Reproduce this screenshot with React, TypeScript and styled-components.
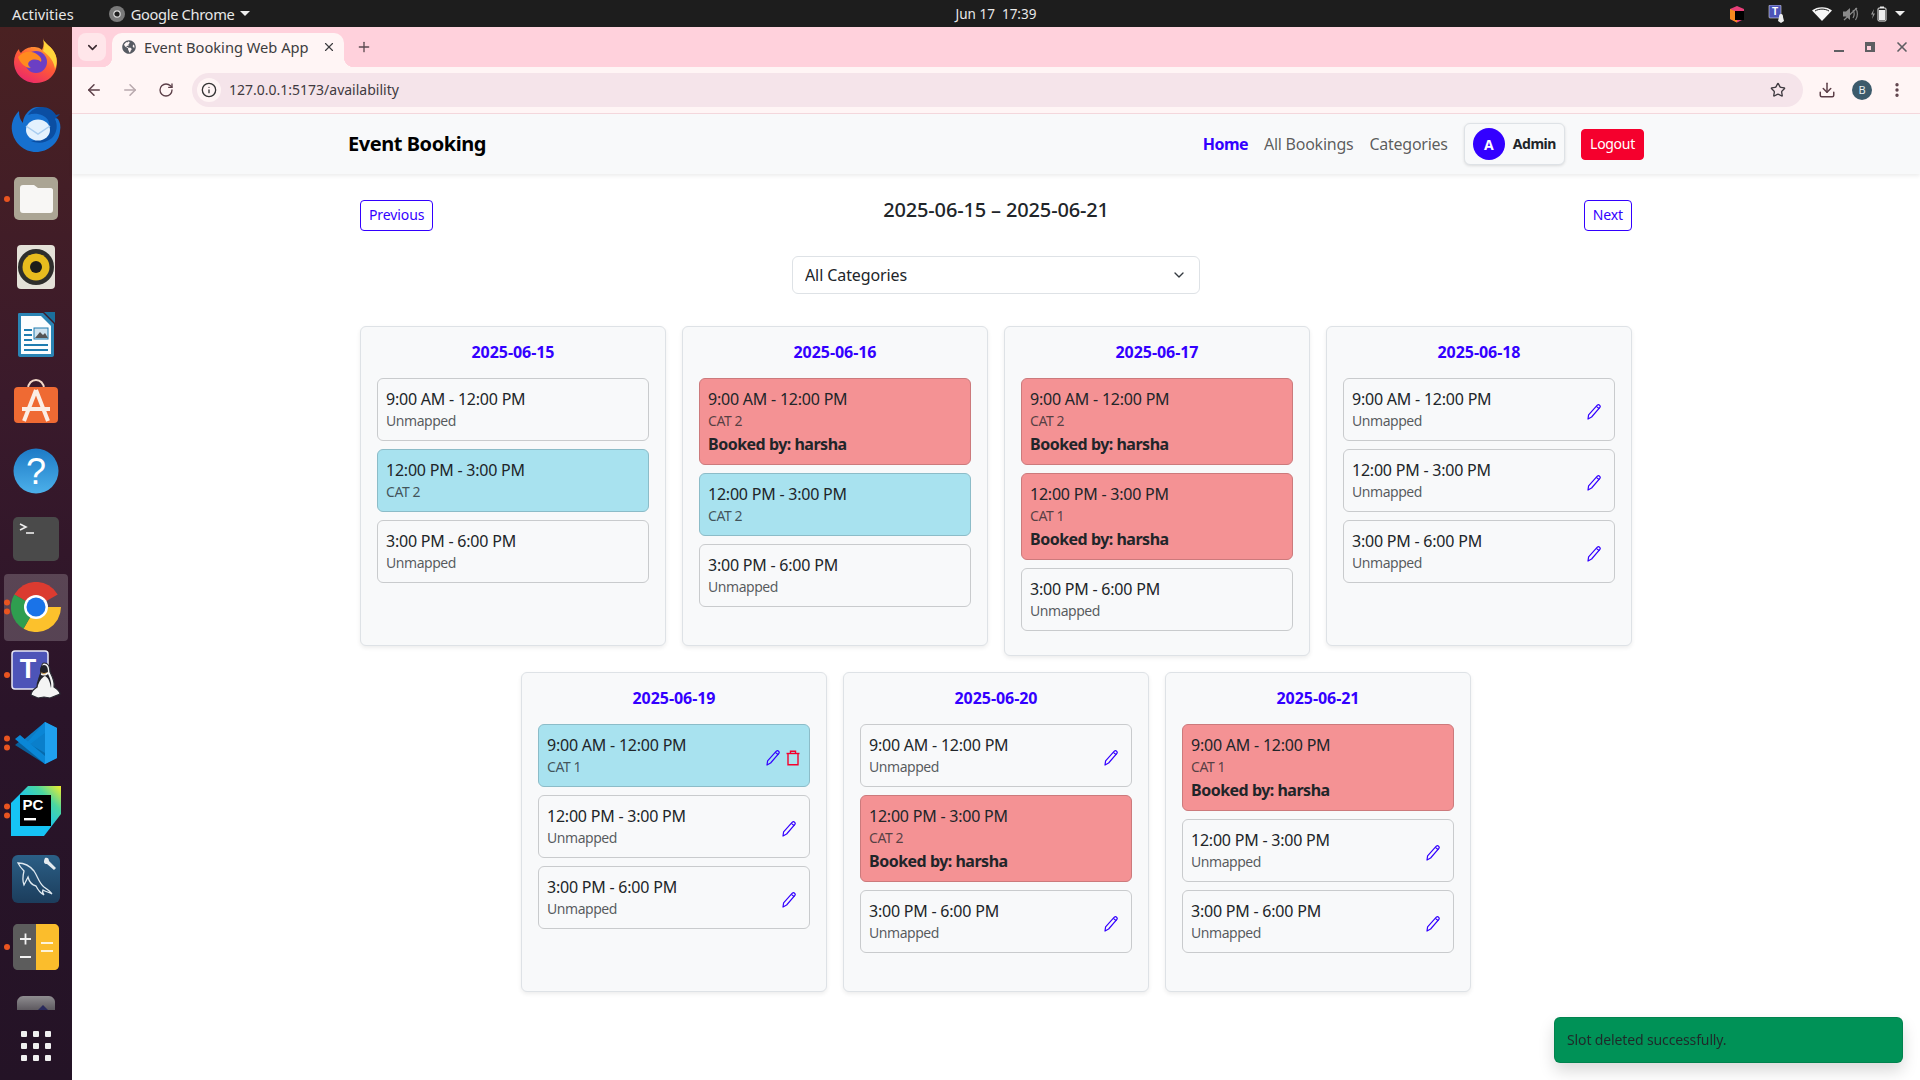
import React from 'react';
import styled, { createGlobalStyle } from 'styled-components';
import {
  ArrowLeft,
  ArrowRight,
  ChevronDown,
  Download,
  EllipsisVertical,
  Info,
  Plus,
  RotateCw,
  Star,
  X,
} from 'lucide-react';
import { FaGlobeAmericas } from 'react-icons/fa';

type SlotKind = 'free' | 'mapped' | 'booked';

interface Slot {
  time: string;
  label: string;
  kind: SlotKind;
  bookedBy?: string;
  editable?: boolean;
  deletable?: boolean;
}

interface Day {
  date: string;
  slots: Slot[];
}

const T1 = '9:00 AM - 12:00 PM';
const T2 = '12:00 PM - 3:00 PM';
const T3 = '3:00 PM - 6:00 PM';

const free = (time: string, editable = false): Slot => ({ time, label: 'Unmapped', kind: 'free', editable });
const booked = (time: string, label: string): Slot => ({ time, label, kind: 'booked', bookedBy: 'harsha' });

const days: Day[] = [
  { date: '2025-06-15', slots: [free(T1), { time: T2, label: 'CAT 2', kind: 'mapped' }, free(T3)] },
  { date: '2025-06-16', slots: [booked(T1, 'CAT 2'), { time: T2, label: 'CAT 2', kind: 'mapped' }, free(T3)] },
  { date: '2025-06-17', slots: [booked(T1, 'CAT 2'), booked(T2, 'CAT 1'), free(T3)] },
  { date: '2025-06-18', slots: [free(T1, true), free(T2, true), free(T3, true)] },
  {
    date: '2025-06-19',
    slots: [{ time: T1, label: 'CAT 1', kind: 'mapped', editable: true, deletable: true }, free(T2, true), free(T3, true)],
  },
  { date: '2025-06-20', slots: [free(T1, true), booked(T2, 'CAT 2'), free(T3, true)] },
  { date: '2025-06-21', slots: [booked(T1, 'CAT 1'), free(T2, true), free(T3, true)] },
];

const PRIMARY = '#3300ff';
const DANGER = '#f5002d';
const UI_FONT = '"Noto Sans", "Open Sans", sans-serif';

const GlobalStyle = createGlobalStyle`
  html, body {
    margin: 0;
    height: 100%;
    overflow: hidden;
  }
  body {
    font-family: ${UI_FONT};
    color: #212529;
    background: #fff;
  }
  * {
    box-sizing: border-box;
  }
`;

const Shell = styled.div`
  display: flex;
  flex-direction: column;
  height: 100vh;
  overflow: hidden;
`;

const TopBar = styled.header`
  display: grid;
  grid-template-columns: 1fr auto 1fr;
  align-items: center;
  height: 27px;
  padding: 0 12px;
  background: #1d1d1d;
  color: #e8e8e8;
  font-size: 14.67px;
`;

const TopLeft = styled.div`
  display: flex;
  align-items: center;
  letter-spacing: 0.07px;
`;

const AppMenu = styled.div`
  display: flex;
  align-items: center;
  gap: 6px;
  margin-left: 35px;
  letter-spacing: -0.35px;
`;

const Caret = styled.span`
  width: 0;
  height: 0;
  border-left: 5px solid transparent;
  border-right: 5px solid transparent;
  border-top: 5px solid #eee;
`;

const Clock = styled.div`
  margin-left: 72px;
  white-space: pre;
  font-size: 13.5px;
`;

const Tray = styled.div`
  display: flex;
  align-items: center;
  justify-content: flex-end;
  padding-right: 3px;
`;

const TrayIcon = styled.span<{ $gap: number }>`
  display: flex;
  margin-left: ${props => props.$gap}px;
`;

const Desktop = styled.div`
  display: flex;
  flex: 1;
  min-height: 0;
`;

const Dock = styled.nav`
  display: flex;
  flex-direction: column;
  flex: 0 0 72px;
  background: linear-gradient(180deg, #4a2122 0%, #3a1a2b 35%, #2a1429 65%, #241326 100%);
`;

const DockList = styled.div`
  flex: 1;
  min-height: 0;
  padding-top: 2px;
  overflow: hidden;
`;

const DockItem = styled.div<{ $active?: boolean; $lift?: number }>`
  position: relative;
  display: flex;
  align-items: center;
  justify-content: center;
  width: 72px;
  height: 68px;

  &::before {
    content: '';
    position: absolute;
    inset: 1px 4px 0;
    border-radius: 4px;
    background: ${props => (props.$active ? 'rgba(255,255,255,0.2)' : 'transparent')};
  }

  svg {
    position: relative;
    margin-bottom: ${props => props.$lift ?? 0}px;
  }
`;

const RunDots = styled.div`
  position: absolute;
  left: 4px;
  top: 50%;
  display: flex;
  flex-direction: column;
  gap: 3px;
  transform: translateY(-50%);
`;

const RunDot = styled.span`
  width: 6px;
  height: 6px;
  border-radius: 50%;
  background: #e95420;
`;

const ShowApps = styled.div`
  display: grid;
  grid-template-columns: repeat(3, 6px);
  gap: 6px;
  align-content: center;
  justify-content: center;
  height: 70px;
  padding-top: 2px;
`;

const AppDot = styled.span`
  width: 6px;
  height: 6px;
  border-radius: 1px;
  background: #f0f0f0;
`;

const Browser = styled.main`
  display: flex;
  flex: 1;
  flex-direction: column;
  min-width: 0;
`;

const TabStrip = styled.div`
  display: flex;
  align-items: flex-end;
  height: 40px;
  padding-left: 6px;
  background: #ffd1dc;
`;

const TabSearch = styled.div`
  display: flex;
  align-items: center;
  justify-content: center;
  align-self: flex-start;
  width: 28px;
  height: 28px;
  margin-top: 6px;
  border-radius: 8px;
  background: #ffe6ea;
  color: #3a2a30;
`;

const Tab = styled.div`
  position: relative;
  display: flex;
  align-items: center;
  width: 232px;
  height: 34px;
  margin-left: 6px;
  padding: 0 8px 6px 10px;
  border-radius: 10px 10px 0 0;
  background: #fff5f5;
  color: #3d3d40;
  font-size: 14.67px;

  &::before,
  &::after {
    content: '';
    position: absolute;
    bottom: 0;
    width: 10px;
    height: 10px;
  }
  &::before {
    left: -10px;
    background: radial-gradient(circle at 0 0, transparent 10px, #fff5f5 10.5px);
  }
  &::after {
    right: -10px;
    background: radial-gradient(circle at 100% 0, transparent 10px, #fff5f5 10.5px);
  }
`;

const TabTitle = styled.span`
  flex: 1;
  margin-left: 8px;
  white-space: nowrap;
`;

const NewTab = styled.div`
  display: flex;
  align-self: center;
  margin: 0 0 0 12px;
  color: #5b4a50;
`;

const WindowControls = styled.div`
  display: flex;
  align-items: center;
  align-self: center;
  gap: 21px;
  margin-left: auto;
  padding-right: 10px;
  color: #5e5e62;
`;

const MinimizeGlyph = styled.span`
  width: 10px;
  height: 2px;
  margin-top: 8px;
  background: #5e5e62;
`;

const RestoreGlyph = styled.span`
  position: relative;
  width: 8px;
  height: 8px;
  margin-top: 2px;
  border: 2px solid #5e5e62;

  &::after {
    content: '';
    position: absolute;
    top: -4px;
    right: -4px;
    width: 8px;
    height: 8px;
    border-top: 2px solid #5e5e62;
    border-right: 2px solid #5e5e62;
  }
`;

const Toolbar = styled.div`
  display: flex;
  align-items: center;
  height: 47px;
  padding: 0 14px 1px 12px;
  border-bottom: 1px solid #f6d9de;
  background: #fff5f5;
  color: #5c3f48;
`;

const ToolButton = styled.span<{ $dim?: boolean }>`
  display: flex;
  justify-content: center;
  width: 20px;
  margin-right: 16px;
  color: ${props => (props.$dim ? '#b8a8ad' : '#5c3f48')};
`;

const Omnibox = styled.div`
  display: flex;
  flex: 1;
  align-items: center;
  height: 34px;
  padding: 0 17px 0 5px;
  border-radius: 17px;
  background: #f5e4ea;
  color: #3f3a40;
  font-size: 14px;
`;

const SiteInfo = styled.span`
  display: flex;
  align-items: center;
  justify-content: center;
  width: 24px;
  height: 24px;
  border-radius: 50%;
  background: #fff5f5;
  color: #333;
`;

const Url = styled.span`
  flex: 1;
  margin-left: 8px;
`;

const ToolEnd = styled.div`
  display: flex;
  align-items: center;
  gap: 16px;
  margin-left: 15px;
`;

const Profile = styled.span`
  display: flex;
  align-items: center;
  justify-content: center;
  width: 20px;
  height: 20px;
  border-radius: 50%;
  background: #3c5a6b;
  color: #e8eef0;
  font-size: 11px;
`;

const Viewport = styled.div`
  flex: 1;
  min-height: 0;
  background: #fff;
`;

const Navbar = styled.div`
  height: 60px;
  background: #f8f9fa;
  box-shadow: 0 2px 4px rgba(0, 0, 0, 0.075);
`;

const NavInner = styled.div`
  display: flex;
  align-items: center;
  justify-content: space-between;
  max-width: 1320px;
  height: 100%;
  margin: 0 auto;
  padding: 0 12px;
`;

const Brand = styled.div`
  margin-bottom: 2px;
  color: #000;
  font-size: 20px;
  font-weight: 700;
  letter-spacing: -0.45px;
`;

const NavLinks = styled.div`
  display: flex;
  align-items: center;
  gap: 16px;
`;

const NavLink = styled.a<{ $active?: boolean }>`
  margin-bottom: 1px;
  color: ${props => (props.$active ? PRIMARY : 'rgba(0, 0, 0, 0.65)')};
  font-size: 16px;
  font-weight: ${props => (props.$active ? 700 : 400)};
  letter-spacing: ${props => (props.$active ? -0.55 : -0.25)}px;
`;

const UserChip = styled.div`
  display: flex;
  align-items: center;
  gap: 8px;
  padding: 4px 8px;
  border: 1px solid #dee2e6;
  border-radius: 6px;
  background: #f8f9fa;
  box-shadow: 0 1px 3px rgba(0, 0, 0, 0.12);
`;

const Avatar = styled.span`
  display: flex;
  align-items: center;
  justify-content: center;
  width: 32px;
  height: 32px;
  border-radius: 50%;
  background: ${PRIMARY};
  color: #fff;
  font-size: 14px;
  font-weight: 700;
`;

const UserName = styled.span`
  margin-bottom: 2px;
  font-size: 14px;
  font-weight: 700;
  letter-spacing: -0.45px;
`;

const LogoutButton = styled.button`
  height: 31px;
  width: 63px;
  padding: 0 0 2px;
  border: 1px solid ${DANGER};
  border-radius: 4px;
  background: ${DANGER};
  color: #fff;
  font: 400 14px ${UI_FONT};
  letter-spacing: -0.3px;
`;

const Content = styled.div`
  display: flex;
  flex-direction: column;
  max-width: 1320px;
  margin: 0 auto;
  padding: 26px 24px 0;
`;

const WeekHeader = styled.div`
  display: grid;
  grid-template-columns: 1fr auto 1fr;
  align-items: flex-start;
  height: 56px;
`;

const PagerButton = styled.button<{ $end?: boolean }>`
  justify-self: ${props => (props.$end ? 'end' : 'start')};
  height: 31px;
  padding: 0 8px 2px;
  border: 1px solid ${PRIMARY};
  border-radius: 4px;
  background: #fff;
  color: ${PRIMARY};
  font: 400 14px ${UI_FONT};
  letter-spacing: -0.1px;
`;

const WeekTitle = styled.h5`
  margin: -1px 0 0;
  font-size: 20px;
  font-weight: 500;
  line-height: 22px;
  letter-spacing: -0.15px;
`;

const FilterRow = styled.div`
  display: flex;
  justify-content: center;
  margin-bottom: 32px;
`;

const SelectWrap = styled.div`
  position: relative;
  width: 408px;
  color: #343a40;
`;

const CategorySelect = styled.select`
  display: block;
  width: 100%;
  height: 38px;
  padding: 0 36px 0 12px;
  border: 1px solid #dee2e6;
  border-radius: 6px;
  background: #fff;
  color: #212529;
  font: 400 16px ${UI_FONT};
  letter-spacing: -0.1px;
  appearance: none;
`;

const SelectChevron = styled.span`
  position: absolute;
  top: 11px;
  right: 13px;
  display: flex;
  pointer-events: none;
`;

const DaysGrid = styled.div`
  display: flex;
  flex-wrap: wrap;
  align-items: flex-start;
  justify-content: center;
  gap: 16px;
`;

const DayCard = styled.section`
  display: flex;
  flex-direction: column;
  width: 306px;
  min-height: 320px;
  padding: 16px;
  border: 1px solid #dee2e6;
  border-radius: 6px;
  background: #f8f9fa;
  box-shadow: 0 2px 4px rgba(0, 0, 0, 0.075);
`;

const DayTitle = styled.h6`
  margin: 0 0 16px;
  color: ${PRIMARY};
  font-size: 16px;
  font-weight: 700;
  line-height: 19.2px;
  text-align: center;
  letter-spacing: -0.05px;
`;

const slotColors: Record<SlotKind, { bg: string; border: string }> = {
  free: { bg: '#f8f9fa', border: '#c9cbcd' },
  mapped: { bg: '#a8e2ef', border: '#8cbcc8' },
  booked: { bg: '#f49294', border: '#cc7a7c' },
};

const SlotRow = styled.div<{ $kind: SlotKind }>`
  display: flex;
  align-items: center;
  justify-content: space-between;
  margin-bottom: 8px;
  padding: 8px;
  border: 1px solid ${props => slotColors[props.$kind].border};
  border-radius: 6px;
  background: ${props => slotColors[props.$kind].bg};
`;

const SlotText = styled.div`
  min-width: 0;
`;

const SlotTime = styled.div`
  font-size: 16px;
  line-height: 24px;
  letter-spacing: -0.22px;
`;

const SlotLabel = styled.div`
  padding-bottom: 2px;
  color: rgba(33, 37, 41, 0.75);
  font-size: 14px;
  line-height: 19px;
  letter-spacing: -0.45px;
`;

const BookedBy = styled.div`
  font-size: 16px;
  font-weight: 700;
  line-height: 24px;
  letter-spacing: -0.5px;
`;

const SlotActions = styled.div<{ $solo: boolean }>`
  display: flex;
  align-items: center;
  gap: 4px;
  margin-top: 4px;
  margin-right: ${props => (props.$solo ? 4 : 0)}px;
`;

const IconButton = styled.button<{ $color: string }>`
  display: flex;
  width: 16px;
  height: 16px;
  padding: 0;
  border: 0;
  background: none;
  color: ${props => props.$color};
`;

const Toast = styled.div`
  position: fixed;
  right: 17px;
  bottom: 17px;
  display: flex;
  align-items: center;
  width: 349px;
  height: 46px;
  padding: 0 12px 2px;
  border: 1px solid rgba(0, 0, 0, 0.1);
  border-radius: 6px;
  background: #009257;
  color: #1f2a2a;
  font-size: 14px;
  letter-spacing: -0.13px;
  box-shadow: 0 8px 16px rgba(0, 0, 0, 0.15);
`;

const PencilIcon = () => (
  <svg width="16" height="16" viewBox="0 0 16 16" fill="none" stroke="currentColor" strokeWidth="1.2" strokeLinejoin="round">
    <path d="M11.3 1.2c.7-.6 1.8-.5 2.4.2.6.7.6 1.7 0 2.3L5.6 13 2 15l.6-4.2z" />
    <path d="M10.3 2.4l3 2.4" />
  </svg>
);

const TrashIcon = () => (
  <svg width="16" height="16" viewBox="0 0 16 16" fill="none" stroke="currentColor" strokeWidth="1.4">
    <path d="M1.5 3.5h13" />
    <path d="M5.5 3.5V1.2h5v2.3" />
    <path d="M3 3.5v11.3h10V3.5" />
  </svg>
);

const FirefoxIcon = () => (
  <svg width="48" height="48" viewBox="0 0 48 48">
    <defs>
      <linearGradient id="ffBase" x1="0.7" y1="0" x2="0.2" y2="1">
        <stop offset="0" stopColor="#ffbd2e" />
        <stop offset="0.5" stopColor="#ff5a36" />
        <stop offset="1" stopColor="#e8246f" />
      </linearGradient>
    </defs>
    <path d="M31 1c1 5 5 6 9 11 5 6 6 13 4 20-3 9-11 14-20 14C12 46 2 37 2 25c0-5 2-10 5-13 0 2 1 3 2 4 3-4 8-6 12-6 5 0 7 1 9 3 2-4 2-8 1-12z" fill="url(#ffBase)" />
    <path d="M31 1c1 5 5 6 9 11 5 6 6 13 3 20-1-7-5-13-12-18 2-4 1-9 0-13z" fill="#ffd43b" />
    <circle cx="24" cy="25" r="11" fill="#6b3fc4" />
    <path d="M6 20c5-6 14-7 20-2 3 2 4 5 3 7-3-3-8-3-11-1-3 2-2 5 1 7-6 0-11-5-13-11z" fill="#ff8a1e" />
  </svg>
);

const ThunderbirdIcon = () => (
  <svg width="50" height="48" viewBox="0 0 50 48">
    <path d="M8 6C2 12 0 19 1 26c2 12 12 21 24 21s23-9 24-21c1-5 0-9-2-12l-4-2c-3-6-9-10-16-10-3 0-6 1-8 3-5 4-7 9-7 13-3-3-4-7-4-12z" fill="#1670cf" />
    <path d="M17 10c3-5 8-8 14-8 6 0 11 3 14 8l4-1-5 5c3 6 2 14-3 19-6 5-14 6-21 3 7 0 14-3 17-8 2-4 2-9 0-13-3-5-12-8-20-5z" fill="#0b4ea2" />
    <ellipse cx="27" cy="25" rx="12" ry="10.5" fill="#e4f1fd" />
    <path d="M15 21l12 8 12-8" fill="none" stroke="#a9cdf0" strokeWidth="1.5" />
  </svg>
);

const FilesIcon = () => (
  <svg width="46" height="44" viewBox="0 0 46 44">
    <rect x="1" y="0" width="44" height="43" rx="5" fill="#aba594" />
    <path d="M7 11c0-2 1-3 3-3h11l4 3h13c1 0 2 1 2 2v20c0 2-1 3-3 3H10c-2 0-3-1-3-3z" fill="#f8f7f5" />
  </svg>
);

const RhythmboxIcon = () => (
  <svg width="38" height="44" viewBox="0 0 38 44">
    <rect width="38" height="44" rx="4" fill="#e4e1d8" />
    <circle cx="19" cy="22" r="18" fill="#2e2e2c" />
    <circle cx="19" cy="22" r="13.5" fill="#e8bc1e" />
    <circle cx="19" cy="22" r="6" fill="#1c1c1a" />
  </svg>
);

const WriterIcon = () => (
  <svg width="38" height="46" viewBox="0 0 38 46">
    <path d="M2 1h24l11 11v31c0 1-1 2-2 2H3c-1 0-2-1-2-2V2c0-1 1-1 1-1z" fill="#2a84b4" />
    <path d="M4 4h20l10 10v28H4z" fill="#fbfdfe" />
    <path d="M27 0l11 11V0z" fill="#1b6f9c" />
    <path d="M7 17h8v2H7zM7 22h8v2H7zM7 27h8v2H7zM7 32h24v2H7zM7 37h24v2H7z" fill="#1e7cb0" />
    <rect x="17" y="16" width="14" height="11" fill="#cfe3ef" stroke="#1e7cb0" />
    <path d="M18 26l5-6 3 3 2-2 3 5z" fill="#555" />
  </svg>
);

const AppCenterIcon = () => (
  <svg width="46" height="46" viewBox="0 0 46 46">
    <path d="M15 11c0-12 16-12 16 0" fill="none" stroke="#f2d8c8" strokeWidth="2" />
    <rect x="1" y="9" width="44" height="36" rx="4" fill="#ef6a33" />
    <path d="M23 12L11 43M23 12l12 31M9 31h28" stroke="#fbeee6" strokeWidth="4" fill="none" />
  </svg>
);

const HelpIcon = () => (
  <svg width="46" height="46" viewBox="0 0 46 46">
    <defs>
      <linearGradient id="helpBg" x1="0" y1="0" x2="0" y2="1">
        <stop offset="0" stopColor="#1d7ac6" />
        <stop offset="1" stopColor="#4cb0ea" />
      </linearGradient>
    </defs>
    <circle cx="23" cy="23" r="22.5" fill="url(#helpBg)" />
    <text x="23" y="36" textAnchor="middle" fill="#fff" fontSize="36" fontFamily="Liberation Sans, sans-serif">?</text>
  </svg>
);

const TerminalIcon = () => (
  <svg width="46" height="44" viewBox="0 0 46 44">
    <rect width="46" height="44" rx="5" fill="#4a4a4a" />
    <path d="M7 7l6 3-6 3" fill="none" stroke="#eee" strokeWidth="1.6" />
    <path d="M13 16h8" stroke="#eee" strokeWidth="1.6" />
  </svg>
);

const ChromeIcon = () => (
  <svg width="50" height="50" viewBox="0 0 50 50">
    <path d="M25 25L3.3 12.5A25 25 0 0 1 46.7 12.5z" fill="#db3b30" />
    <path d="M25 25h25a25 25 0 0 1-37.5 21.7z" fill="#fcc12c" />
    <path d="M25 25L12.5 46.7A25 25 0 0 1 3.3 12.5z" fill="#2f9e4f" />
    <circle cx="25" cy="25" r="12" fill="#fff" />
    <circle cx="25" cy="25" r="9.5" fill="#1a73e8" />
  </svg>
);

const TeamsIcon = () => (
  <svg width="50" height="50" viewBox="0 0 50 50">
    <rect x="1" y="1" width="36" height="38" rx="3" fill="#4d54b8" stroke="#e8e8f5" strokeWidth="1.5" />
    <text x="17" y="28" textAnchor="middle" fill="#fff" fontSize="27" fontWeight="700" fontFamily="Liberation Sans, sans-serif">T</text>
    <path d="M33 13c5 0 6 5 6 9 2 4 5 9 4 15 3 2 6 5 6 7l-10 4-6-1-6 1-7-3c0-3 3-6 6-8 0-6 3-10 4-15 0-4 0-9 3-9z" fill="#f4f4f4" stroke="#2a2a33" strokeWidth="1.2" />
    <path d="M33 15c3 0 4 3 4 7-3 2-6 2-8 0 0-4 1-7 4-7zM26 38c0-6 2-10 3-14 2 2 6 2 8 0 2 4 4 9 3 14-1-5-2-10-6-12-4 2-6 6-8 12z" fill="#22222a" />
    <path d="M29 21.500l4 2 4-2-4 3z" fill="#e8a33a" />
  </svg>
);

const VsCodeIcon = () => (
  <svg width="44" height="44" viewBox="0 0 44 44">
    <path d="M31 1l12 6v30l-12 6-20-19z" fill="#0a7fcb" />
    <path d="M31 1l12 6v30l-12 6z" fill="#1fa0ee" />
    <path d="M31 12L14 22l17 10v11L1 24l5-4 6 4 19-12z" fill="#0568a8" opacity="0.9" />
    <path d="M1 18l5-4 25 21v8z" fill="#0a87d6" />
    <path d="M31 1v11L12 26l-6-4z" fill="#0a87d6" opacity="0.9" />
  </svg>
);

const PyCharmIcon = () => (
  <svg width="50" height="50" viewBox="0 0 50 50">
    <defs>
      <linearGradient id="pcBg" x1="0" y1="1" x2="1" y2="0">
        <stop offset="0.45" stopColor="#16c3f5" />
        <stop offset="0.75" stopColor="#4bd6a0" />
        <stop offset="1" stopColor="#f3ee2c" />
      </linearGradient>
    </defs>
    <path d="M17 0h33v28L33 50H0V17z" fill="url(#pcBg)" />
    <rect x="9" y="9" width="31" height="31" fill="#000" />
    <text x="11.5" y="24" fill="#fff" fontSize="15" fontWeight="700" fontFamily="Liberation Sans, sans-serif">PC</text>
    <rect x="13" y="32" width="12" height="2.4" fill="#fff" />
  </svg>
);

const WorkbenchIcon = () => (
  <svg width="48" height="48" viewBox="0 0 48 48">
    <defs>
      <linearGradient id="wbBg" x1="0" y1="0" x2="0" y2="1">
        <stop offset="0" stopColor="#2b5f86" />
        <stop offset="1" stopColor="#1c3d5c" />
      </linearGradient>
    </defs>
    <rect width="48" height="48" rx="6" fill="url(#wbBg)" />
    <path d="M6 8c6 0 12 3 16 8 4 6 5 12 10 16 3 2 6 4 8 7-3-2-6-2-9-4-1 2 0 4 1 5-4-2-6-5-8-9-4-1-7-5-8-9l-4 8c-2-5-1-10 0-14-2-2-4-4-6-8z" fill="none" stroke="#dfe9f0" strokeWidth="1.3" />
    <path d="M35 5l6 6M33 3c2-1 4 0 4 3l7 7-2 2-7-6c-3 0-4-2-2-6z" fill="#e4ebf0" />
  </svg>
);

const CalculatorIcon = () => (
  <svg width="46" height="46" viewBox="0 0 46 46">
    <path d="M5 0h18v46H5c-3 0-5-2-5-5V5c0-3 2-5 5-5z" fill="#5c5c5c" />
    <path d="M23 0h18c3 0 5 2 5 5v36c0 3-2 5-5 5H23z" fill="#fbbd2c" />
    <path d="M7 15h11M12.5 9.5v11M7 33h11" stroke="#f2f2f2" strokeWidth="1.8" />
    <path d="M28 19h12M28 27h12" stroke="#fdf3d8" strokeWidth="1.8" />
  </svg>
);

const TrashBinIcon = () => (
  <svg width="38" height="38" viewBox="0 0 38 38">
    <defs>
      <linearGradient id="binBg" x1="0" y1="0" x2="0" y2="1">
        <stop offset="0" stopColor="#8f8d90" />
        <stop offset="0.6" stopColor="#3e3840" />
      </linearGradient>
    </defs>
    <path d="M6 0h26c3 0 6 3 6 6v32H0V6c0-3 3-6 6-6z" fill="url(#binBg)" />
    <path d="M26 9l8 8-8 8-8-8z" fill="#2a2a5c" />
  </svg>
);

const dockApps = [
  { id: 'firefox', icon: <FirefoxIcon />, dots: 0, lift: 4 },
  { id: 'thunderbird', icon: <ThunderbirdIcon />, dots: 0, lift: 4 },
  { id: 'files', icon: <FilesIcon />, dots: 1 },
  { id: 'rhythmbox', icon: <RhythmboxIcon />, dots: 0 },
  { id: 'writer', icon: <WriterIcon />, dots: 0 },
  { id: 'appcenter', icon: <AppCenterIcon />, dots: 0, lift: 4 },
  { id: 'help', icon: <HelpIcon />, dots: 0 },
  { id: 'terminal', icon: <TerminalIcon />, dots: 0 },
  { id: 'chrome', icon: <ChromeIcon />, dots: 2, active: true },
  { id: 'teams', icon: <TeamsIcon />, dots: 1 },
  { id: 'vscode', icon: <VsCodeIcon />, dots: 2 },
  { id: 'pycharm', icon: <PyCharmIcon />, dots: 2 },
  { id: 'workbench', icon: <WorkbenchIcon />, dots: 0 },
  { id: 'calculator', icon: <CalculatorIcon />, dots: 1 },
  { id: 'trash', icon: <TrashBinIcon />, dots: 0 },
];

const TrayJetbrains = () => (
  <svg width="18" height="18" viewBox="0 0 18 18">
    <path d="M9 1l7 3v10l-7 3.5L2 14V4z" fill="#e8407a" />
    <path d="M2 4l7 3v10.5L2 14z" fill="#f58a1f" />
    <rect x="7" y="6" width="9" height="9" fill="#000" />
  </svg>
);

const TrayTeams = () => (
  <svg width="18" height="18" viewBox="0 0 18 18">
    <rect x="1" y="0" width="12" height="13" rx="1" fill="#4d54b8" stroke="#ddd" strokeWidth="0.6" />
    <text x="7" y="10" textAnchor="middle" fill="#fff" fontSize="10" fontWeight="700" fontFamily="Liberation Sans, sans-serif">T</text>
    <path d="M13 9c2 0 2 2 2 3l1 4-3 2-3-2 1-4c0-1 0-3 2-3z" fill="#eee" />
  </svg>
);

const TrayWifi = () => (
  <svg width="20" height="14" viewBox="0 0 20 14">
    <path d="M0 3.5C5-1 15-1 20 3.5L10 14z" fill="#f5f5f5" />
    <path d="M3 4C7 1.5 13 1.5 17 4" fill="none" stroke="#1d1d1d" strokeWidth="1" />
  </svg>
);

const TrayMuted = () => (
  <svg width="16" height="14" viewBox="0 0 16 14" fill="#8a8a8a">
    <path d="M0 4.5h3L7 1v12L3 9.5H0z" />
    <path d="M10 3c1.500 2.500 1.500 5.500 0 8M12.500 1c2.500 3.500 2.500 8.500 0 12" fill="none" stroke="#8a8a8a" strokeWidth="1.2" />
    <path d="M1 13L14 1" stroke="#8a8a8a" strokeWidth="1.2" />
  </svg>
);

const TrayBattery = () => (
  <svg width="16" height="16" viewBox="0 0 16 16">
    <path d="M3 3L0 8.500h2L1 13l3-5.500H2z" fill="#9a9a9a" />
    <rect x="7" y="2" width="8" height="13" rx="1" fill="#1d1d1d" stroke="#eee" strokeWidth="1" />
    <rect x="9" y="0.500" width="4" height="1.500" fill="#eee" />
    <rect x="8" y="4" width="6" height="10" fill="#eee" />
  </svg>
);

const TrayChrome = () => (
  <svg width="16" height="16" viewBox="0 0 16 16">
    <circle cx="8" cy="8" r="8" fill="#7a7a7a" />
    <circle cx="8" cy="8" r="3.200" fill="#1d1d1d" stroke="#ddd" strokeWidth="1.200" />
  </svg>
);

const SlotItem: React.FC<{ slot: Slot }> = ({ slot }) => (
  <SlotRow $kind={slot.kind}>
    <SlotText>
      <SlotTime>{slot.time}</SlotTime>
      <SlotLabel>{slot.label}</SlotLabel>
      {slot.bookedBy && <BookedBy>Booked by: {slot.bookedBy}</BookedBy>}
    </SlotText>
    {slot.editable && (
      <SlotActions $solo={!slot.deletable}>
        <IconButton $color={PRIMARY} aria-label="Edit">
          <PencilIcon />
        </IconButton>
        {slot.deletable && (
          <IconButton $color={DANGER} aria-label="Delete">
            <TrashIcon />
          </IconButton>
        )}
      </SlotActions>
    )}
  </SlotRow>
);

const App: React.FC = () => (
  <Shell>
    <GlobalStyle />
    <TopBar>
      <TopLeft>
        Activities
        <AppMenu>
          <TrayChrome />
          Google Chrome
          <Caret />
        </AppMenu>
      </TopLeft>
      <Clock>{'Jun 17  17:39'}</Clock>
      <Tray>
        <TrayIcon $gap={0}><TrayJetbrains /></TrayIcon>
        <TrayIcon $gap={22}><TrayTeams /></TrayIcon>
        <TrayIcon $gap={26}><TrayWifi /></TrayIcon>
        <TrayIcon $gap={11}><TrayMuted /></TrayIcon>
        <TrayIcon $gap={12}><TrayBattery /></TrayIcon>
        <TrayIcon $gap={8}><Caret /></TrayIcon>
      </Tray>
    </TopBar>
    <Desktop>
      <Dock>
        <DockList>
          {dockApps.map(app => (
            <DockItem key={app.id} $active={app.active} $lift={app.lift}>
              {app.dots > 0 && (
                <RunDots>
                  {Array.from({ length: app.dots }).map((_, i) => (
                    <RunDot key={i} />
                  ))}
                </RunDots>
              )}
              {app.icon}
            </DockItem>
          ))}
        </DockList>
        <ShowApps>
          {Array.from({ length: 9 }).map((_, i) => (
            <AppDot key={i} />
          ))}
        </ShowApps>
      </Dock>
      <Browser>
        <TabStrip>
          <TabSearch>
            <ChevronDown size={15} strokeWidth={2.5} />
          </TabSearch>
          <Tab>
            <FaGlobeAmericas size={14} color="#565a62" />
            <TabTitle>Event Booking Web App</TabTitle>
            <X size={14} strokeWidth={2} />
          </Tab>
          <NewTab>
            <Plus size={16} strokeWidth={2} />
          </NewTab>
          <WindowControls>
            <MinimizeGlyph />
            <RestoreGlyph />
            <X size={16} strokeWidth={2.5} />
          </WindowControls>
        </TabStrip>
        <Toolbar>
          <ToolButton><ArrowLeft size={18} strokeWidth={2} /></ToolButton>
          <ToolButton $dim><ArrowRight size={18} strokeWidth={2} /></ToolButton>
          <ToolButton><RotateCw size={16} strokeWidth={2} /></ToolButton>
          <Omnibox>
            <SiteInfo><Info size={16} strokeWidth={2} /></SiteInfo>
            <Url>127.0.0.1:5173/availability</Url>
            <Star size={16} strokeWidth={2} />
          </Omnibox>
          <ToolEnd>
            <Download size={18} strokeWidth={2} />
            <Profile>B</Profile>
            <EllipsisVertical size={18} strokeWidth={2.5} />
          </ToolEnd>
        </Toolbar>
        <Viewport>
          <Navbar>
            <NavInner>
              <Brand>Event Booking</Brand>
              <NavLinks>
                <NavLink $active>Home</NavLink>
                <NavLink>All Bookings</NavLink>
                <NavLink>Categories</NavLink>
                <UserChip>
                  <Avatar>A</Avatar>
                  <UserName>Admin</UserName>
                </UserChip>
                <LogoutButton>Logout</LogoutButton>
              </NavLinks>
            </NavInner>
          </Navbar>
          <Content>
            <WeekHeader>
              <PagerButton>Previous</PagerButton>
              <WeekTitle>2025-06-15 – 2025-06-21</WeekTitle>
              <PagerButton $end>Next</PagerButton>
            </WeekHeader>
            <FilterRow>
              <SelectWrap>
                <CategorySelect defaultValue="all">
                  <option value="all">All Categories</option>
                </CategorySelect>
                <SelectChevron><ChevronDown size={16} /></SelectChevron>
              </SelectWrap>
            </FilterRow>
            <DaysGrid>
              {days.map(day => (
                <DayCard key={day.date}>
                  <DayTitle>{day.date}</DayTitle>
                  {day.slots.map(slot => (
                    <SlotItem key={slot.time} slot={slot} />
                  ))}
                </DayCard>
              ))}
            </DaysGrid>
          </Content>
        </Viewport>
      </Browser>
    </Desktop>
    <Toast>Slot deleted successfully.</Toast>
  </Shell>
);

export default App;
